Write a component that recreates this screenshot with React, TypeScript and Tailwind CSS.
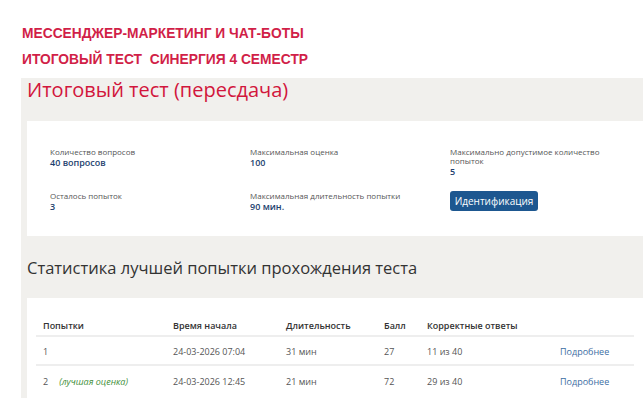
import React from 'react';

const info = [
  { label: 'Количество вопросов', value: '40 вопросов' },
  { label: 'Максимальная оценка', value: '100' },
  { label: 'Максимально допустимое количество попыток', value: '5' },
  { label: 'Осталось попыток', value: '3' },
  { label: 'Максимальная длительность попытки', value: '90 мин.' },
];

const attempts = [
  { n: '1', best: false, start: '24-03-2026 07:04', dur: '31 мин', score: '27', correct: '11 из 40' },
  { n: '2', best: true, start: '24-03-2026 12:45', dur: '21 мин', score: '72', correct: '29 из 40' },
];

const InfoCell: React.FC<{ label: string; value: string }> = ({ label, value }) => (
  <div className="flex flex-col">
    <span className="text-[8px] leading-[9px] text-[#555555]">{label}</span>
    <span className="mt-[1px] text-[9px] leading-[11px] font-semibold text-[#1d3f6e]">{value}</span>
  </div>
);

export default function App() {
  return (
    <div
      className="w-[643px] h-[398px] overflow-hidden bg-white"
      style={{ fontFamily: '"Open Sans", "Noto Sans", sans-serif' }}
    >
      {/* Header */}
      <div
        className="pt-[21px] pl-[22px] text-[13.8px] leading-[26px] font-bold text-[#d11f48]"
        style={{ fontFamily: '"Liberation Sans", Arial, sans-serif' }}
      >
        <div>МЕССЕНДЖЕР-МАРКЕТИНГ И ЧАТ-БОТЫ</div>
        <div>ИТОГОВЫЙ ТЕСТ&nbsp; СИНЕРГИЯ 4 СЕМЕСТР</div>
      </div>

      {/* Test panel */}
      <div className="mt-[5px] ml-[21px] bg-[#f1f0ed] pl-[6px]">
        <h1 className="text-[20px] leading-[24px] font-medium text-[#d2163c]">
          Итоговый тест (пересдача)
        </h1>

        <div className="mt-[19px] bg-white pl-[23px] pt-[26px] pb-[24px]">
          <div className="grid grid-cols-[200px_200px_170px] gap-y-[14px]">
            <InfoCell {...info[0]} />
            <InfoCell {...info[1]} />
            <InfoCell {...info[2]} />
            <InfoCell {...info[3]} />
            <InfoCell {...info[4]} />
            <div className="flex">
              <button className="block h-[20px] w-[88px] rounded-[3px] bg-[#1d5790] text-[10px] leading-[20px] font-medium text-white">
                Идентификация
              </button>
            </div>
          </div>
        </div>

        <h2 className="pt-[20px] pb-[18px] text-[16.5px] leading-[24px] text-[#333333]">
          Статистика лучшей попытки прохождения теста
        </h2>

        {/* Attempts table */}
        <div className="bg-white px-[9px] pt-[18px] pb-[10px]">
          <table className="w-full border-collapse text-[9px] text-left">
            <thead>
              <tr className="h-[20px] text-[#333333]">
                <th className="w-[130px] pl-[7px] font-semibold">Попытки</th>
                <th className="w-[113px] pl-[7px] font-semibold">Время начала</th>
                <th className="w-[98px] pl-[7px] font-semibold">Длительность</th>
                <th className="w-[43px] pl-[7px] font-semibold">Балл</th>
                <th className="w-[133px] pl-[7px] font-semibold">Корректные ответы</th>
                <th className="pl-[7px]"></th>
              </tr>
            </thead>
            <tbody className="text-[#555555]">
              {attempts.map((a) => (
                <tr key={a.n} className="h-[29px] border-t-2 border-[#eeeeee]">
                  <td className="pl-[7px] pt-[3px]">
                    {a.n}
                    {a.best && (
                      <span className="ml-[11px] italic text-[#3f8f3a]">(лучшая оценка)</span>
                    )}
                  </td>
                  <td className="pl-[7px] pt-[3px]">{a.start}</td>
                  <td className="pl-[7px] pt-[3px]">{a.dur}</td>
                  <td className="pl-[7px] pt-[3px]">{a.score}</td>
                  <td className="pl-[7px] pt-[3px]">{a.correct}</td>
                  <td className="pl-[7px] pt-[3px] text-[#3c6ea3]">Подробнее</td>
                </tr>
              ))}
            </tbody>
          </table>
        </div>
      </div>
    </div>
  );
}
